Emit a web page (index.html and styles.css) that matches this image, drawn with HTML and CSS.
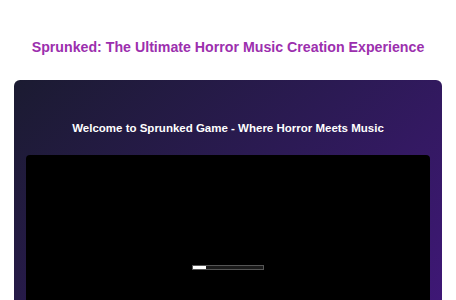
FILE: index.html
```html
<!DOCTYPE html>
<html lang="en">
<head>
  <meta charset="UTF-8" />
  <meta name="viewport" content="width=device-width, initial-scale=1.0" />
  <title>Sprunked</title>
  <link rel="stylesheet" href="styles.css">
</head>
<body>
  <header class="site-header">
    <h1>Sprunked: The Ultimate Horror Music Creation Experience</h1>
  </header>
  <main class="page">
    <section class="game-card">
      <h2>Welcome to Sprunked Game - Where Horror Meets Music</h2>
      <div class="game-frame">
        <div class="loader">
          <div class="loader-fill"></div>
        </div>
      </div>
    </section>
  </main>
</body>
</html>
```

FILE: styles.css
```css
* {
  box-sizing: border-box;
}
body {
  margin: 0;
  font-family: "Liberation Sans", Arial, sans-serif;
  background: #fff;
  color: #fff;
  overflow: hidden;
}
.site-header {
  height: 80px;
  display: flex;
  align-items: center;
  justify-content: center;
  padding-top: 14px;
}
.site-header h1 {
  margin: 0;
  font-size: 14.2px;
  font-weight: bold;
  color: #9c2fae;
}
.page {
  padding: 0 14px;
}
.game-card {
  background: linear-gradient(135deg, #1b1b31 0%, #2c1a55 50%, #41177a 100%);
  border-radius: 6px;
  padding: 41px 12px 0;
  height: 260px;
}
.game-card h2 {
  margin: 0 0 19px;
  text-align: center;
  font-size: 11.5px;
  font-weight: bold;
  line-height: 15px;
}
.game-frame {
  background: #000;
  border-radius: 4px;
  height: 200px;
  display: flex;
  justify-content: center;
  padding-top: 110px;
}
.loader {
  width: 72px;
  height: 5px;
  border: 1px solid #555;
  background: #1a1a1a;
}
.loader-fill {
  width: 13px;
  height: 100%;
  background: #fff;
}
```
